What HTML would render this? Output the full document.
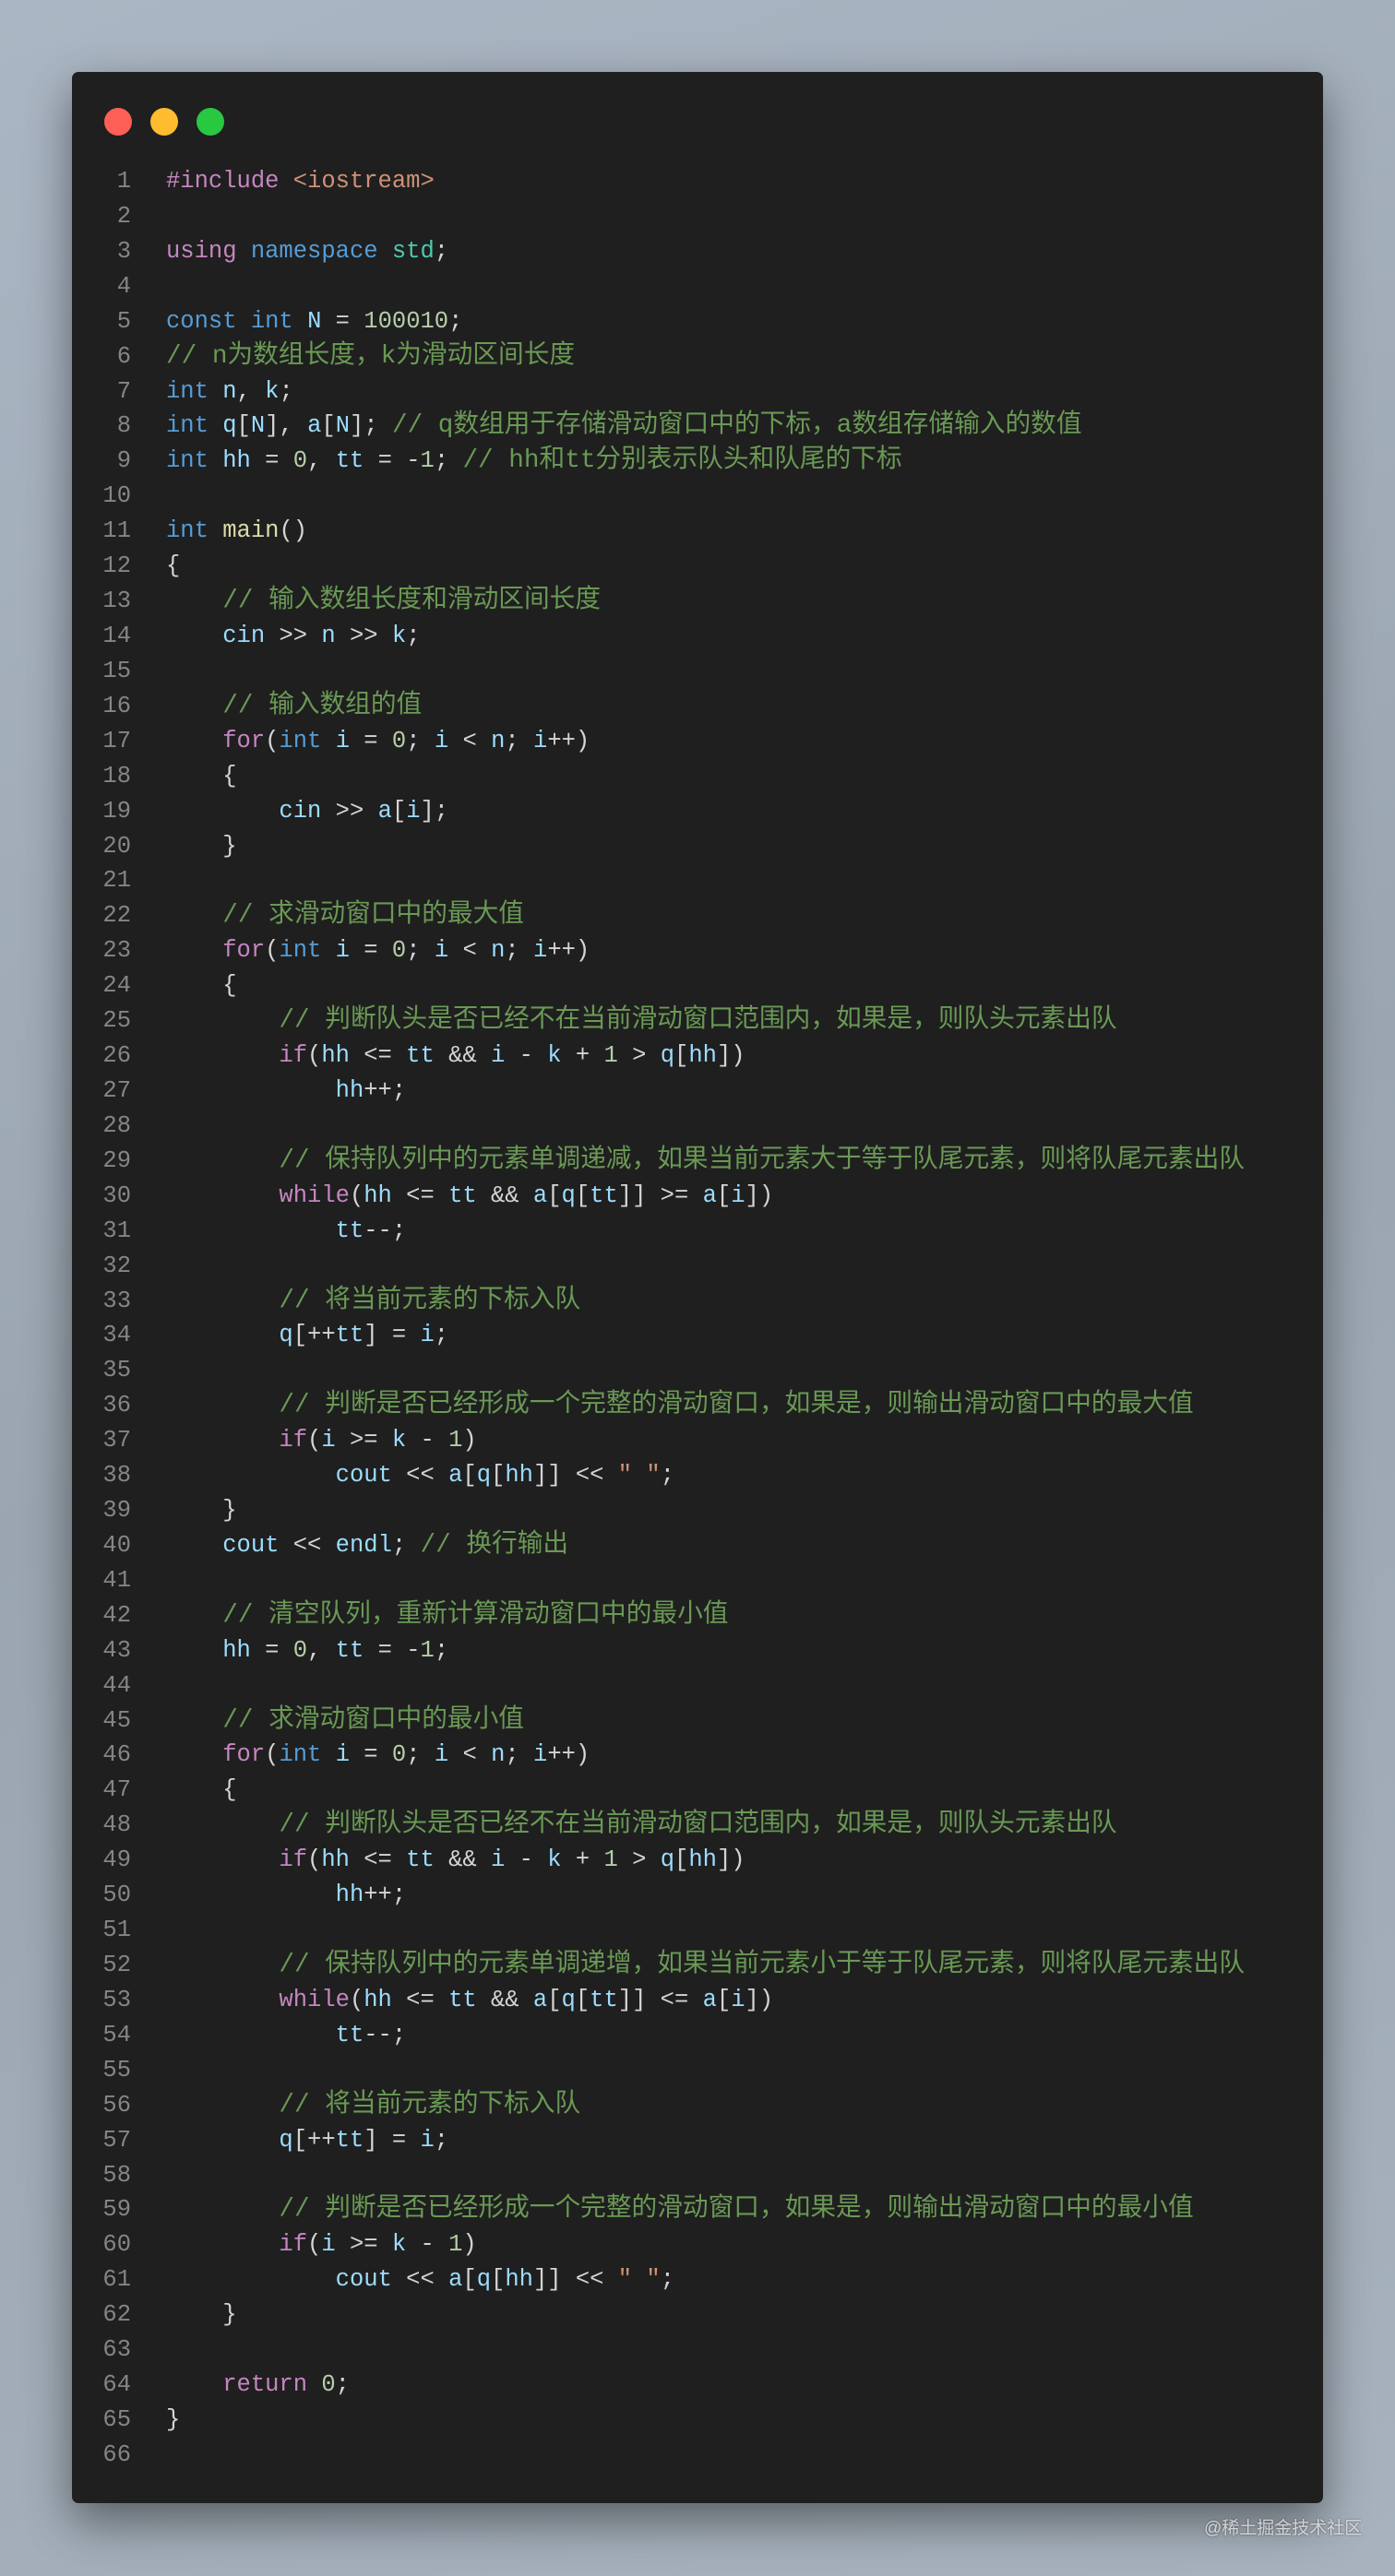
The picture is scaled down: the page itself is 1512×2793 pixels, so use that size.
<!DOCTYPE html>
<html><head><meta charset="utf-8"><style>
html,body{margin:0;padding:0}
body{width:1512px;height:2793px;position:relative;overflow:hidden;background:linear-gradient(160deg,#aab6c3 0%,#9aa5b0 50%,#a7b2bd 100%);font-family:"Liberation Mono","Noto Sans CJK SC",monospace}
.win{position:absolute;left:78px;top:78px;width:1356px;height:2636px;background:#1f1f1f;border-radius:7px;box-shadow:0 20px 50px rgba(0,0,0,.45)}
.dot{position:absolute;top:117px;width:30px;height:30px;border-radius:50%}
.code{position:absolute;left:0;top:178px;width:1512px;font-size:25.5px;color:#d4d4d4}
.l{height:37.93px;line-height:37.93px;white-space:pre;position:relative}
.n{position:absolute;left:0;width:142px;text-align:right;color:#858585}
.t{position:absolute;left:180px}
.k{color:#c586c0}.b{color:#569cd6}.s{color:#4ec9b0}.v{color:#9cdcfe}.num{color:#b5cea8}.str{color:#ce9178}.c{color:#6a9955;font-size:27.7px}.f{color:#dcdcaa}
.wm{position:absolute;left:1305px;top:2726px;font-family:"Liberation Sans","Noto Sans CJK SC",sans-serif;font-size:19px;color:rgba(240,240,240,.8);text-shadow:0 0 2px rgba(0,0,0,.5)}
</style></head><body>
<div class="win"></div>
<div class="dot" style="left:113px;background:#fe5f57"></div>
<div class="dot" style="left:163px;background:#febc2e"></div>
<div class="dot" style="left:213px;background:#28c840"></div>
<div class="code">
<div class="l"><span class="n">1</span><span class="t"><span class="k">#include</span> <span class="str">&lt;iostream&gt;</span></span></div>
<div class="l"><span class="n">2</span></div>
<div class="l"><span class="n">3</span><span class="t"><span class="k">using</span> <span class="b">namespace</span> <span class="s">std</span>;</span></div>
<div class="l"><span class="n">4</span></div>
<div class="l"><span class="n">5</span><span class="t"><span class="b">const</span> <span class="b">int</span> <span class="v">N</span> = <span class="num">100010</span>;</span></div>
<div class="l"><span class="n">6</span><span class="t"><span class="c">// n为数组长度，k为滑动区间长度</span></span></div>
<div class="l"><span class="n">7</span><span class="t"><span class="b">int</span> <span class="v">n</span>, <span class="v">k</span>;</span></div>
<div class="l"><span class="n">8</span><span class="t"><span class="b">int</span> <span class="v">q</span>[<span class="v">N</span>], <span class="v">a</span>[<span class="v">N</span>]; <span class="c">// q数组用于存储滑动窗口中的下标，a数组存储输入的数值</span></span></div>
<div class="l"><span class="n">9</span><span class="t"><span class="b">int</span> <span class="v">hh</span> = <span class="num">0</span>, <span class="v">tt</span> = -<span class="num">1</span>; <span class="c">// hh和tt分别表示队头和队尾的下标</span></span></div>
<div class="l"><span class="n">10</span></div>
<div class="l"><span class="n">11</span><span class="t"><span class="b">int</span> <span class="f">main</span>()</span></div>
<div class="l"><span class="n">12</span><span class="t">{</span></div>
<div class="l"><span class="n">13</span><span class="t">    <span class="c">// 输入数组长度和滑动区间长度</span></span></div>
<div class="l"><span class="n">14</span><span class="t">    <span class="v">cin</span> &gt;&gt; <span class="v">n</span> &gt;&gt; <span class="v">k</span>;</span></div>
<div class="l"><span class="n">15</span></div>
<div class="l"><span class="n">16</span><span class="t">    <span class="c">// 输入数组的值</span></span></div>
<div class="l"><span class="n">17</span><span class="t">    <span class="k">for</span>(<span class="b">int</span> <span class="v">i</span> = <span class="num">0</span>; <span class="v">i</span> &lt; <span class="v">n</span>; <span class="v">i</span>++)</span></div>
<div class="l"><span class="n">18</span><span class="t">    {</span></div>
<div class="l"><span class="n">19</span><span class="t">        <span class="v">cin</span> &gt;&gt; <span class="v">a</span>[<span class="v">i</span>];</span></div>
<div class="l"><span class="n">20</span><span class="t">    }</span></div>
<div class="l"><span class="n">21</span></div>
<div class="l"><span class="n">22</span><span class="t">    <span class="c">// 求滑动窗口中的最大值</span></span></div>
<div class="l"><span class="n">23</span><span class="t">    <span class="k">for</span>(<span class="b">int</span> <span class="v">i</span> = <span class="num">0</span>; <span class="v">i</span> &lt; <span class="v">n</span>; <span class="v">i</span>++)</span></div>
<div class="l"><span class="n">24</span><span class="t">    {</span></div>
<div class="l"><span class="n">25</span><span class="t">        <span class="c">// 判断队头是否已经不在当前滑动窗口范围内，如果是，则队头元素出队</span></span></div>
<div class="l"><span class="n">26</span><span class="t">        <span class="k">if</span>(<span class="v">hh</span> &lt;= <span class="v">tt</span> &amp;&amp; <span class="v">i</span> - <span class="v">k</span> + <span class="num">1</span> &gt; <span class="v">q</span>[<span class="v">hh</span>])</span></div>
<div class="l"><span class="n">27</span><span class="t">            <span class="v">hh</span>++;</span></div>
<div class="l"><span class="n">28</span></div>
<div class="l"><span class="n">29</span><span class="t">        <span class="c">// 保持队列中的元素单调递减，如果当前元素大于等于队尾元素，则将队尾元素出队</span></span></div>
<div class="l"><span class="n">30</span><span class="t">        <span class="k">while</span>(<span class="v">hh</span> &lt;= <span class="v">tt</span> &amp;&amp; <span class="v">a</span>[<span class="v">q</span>[<span class="v">tt</span>]] &gt;= <span class="v">a</span>[<span class="v">i</span>])</span></div>
<div class="l"><span class="n">31</span><span class="t">            <span class="v">tt</span>--;</span></div>
<div class="l"><span class="n">32</span></div>
<div class="l"><span class="n">33</span><span class="t">        <span class="c">// 将当前元素的下标入队</span></span></div>
<div class="l"><span class="n">34</span><span class="t">        <span class="v">q</span>[++<span class="v">tt</span>] = <span class="v">i</span>;</span></div>
<div class="l"><span class="n">35</span></div>
<div class="l"><span class="n">36</span><span class="t">        <span class="c">// 判断是否已经形成一个完整的滑动窗口，如果是，则输出滑动窗口中的最大值</span></span></div>
<div class="l"><span class="n">37</span><span class="t">        <span class="k">if</span>(<span class="v">i</span> &gt;= <span class="v">k</span> - <span class="num">1</span>)</span></div>
<div class="l"><span class="n">38</span><span class="t">            <span class="v">cout</span> &lt;&lt; <span class="v">a</span>[<span class="v">q</span>[<span class="v">hh</span>]] &lt;&lt; <span class="str">" "</span>;</span></div>
<div class="l"><span class="n">39</span><span class="t">    }</span></div>
<div class="l"><span class="n">40</span><span class="t">    <span class="v">cout</span> &lt;&lt; <span class="v">endl</span>; <span class="c">// 换行输出</span></span></div>
<div class="l"><span class="n">41</span></div>
<div class="l"><span class="n">42</span><span class="t">    <span class="c">// 清空队列，重新计算滑动窗口中的最小值</span></span></div>
<div class="l"><span class="n">43</span><span class="t">    <span class="v">hh</span> = <span class="num">0</span>, <span class="v">tt</span> = -<span class="num">1</span>;</span></div>
<div class="l"><span class="n">44</span></div>
<div class="l"><span class="n">45</span><span class="t">    <span class="c">// 求滑动窗口中的最小值</span></span></div>
<div class="l"><span class="n">46</span><span class="t">    <span class="k">for</span>(<span class="b">int</span> <span class="v">i</span> = <span class="num">0</span>; <span class="v">i</span> &lt; <span class="v">n</span>; <span class="v">i</span>++)</span></div>
<div class="l"><span class="n">47</span><span class="t">    {</span></div>
<div class="l"><span class="n">48</span><span class="t">        <span class="c">// 判断队头是否已经不在当前滑动窗口范围内，如果是，则队头元素出队</span></span></div>
<div class="l"><span class="n">49</span><span class="t">        <span class="k">if</span>(<span class="v">hh</span> &lt;= <span class="v">tt</span> &amp;&amp; <span class="v">i</span> - <span class="v">k</span> + <span class="num">1</span> &gt; <span class="v">q</span>[<span class="v">hh</span>])</span></div>
<div class="l"><span class="n">50</span><span class="t">            <span class="v">hh</span>++;</span></div>
<div class="l"><span class="n">51</span></div>
<div class="l"><span class="n">52</span><span class="t">        <span class="c">// 保持队列中的元素单调递增，如果当前元素小于等于队尾元素，则将队尾元素出队</span></span></div>
<div class="l"><span class="n">53</span><span class="t">        <span class="k">while</span>(<span class="v">hh</span> &lt;= <span class="v">tt</span> &amp;&amp; <span class="v">a</span>[<span class="v">q</span>[<span class="v">tt</span>]] &lt;= <span class="v">a</span>[<span class="v">i</span>])</span></div>
<div class="l"><span class="n">54</span><span class="t">            <span class="v">tt</span>--;</span></div>
<div class="l"><span class="n">55</span></div>
<div class="l"><span class="n">56</span><span class="t">        <span class="c">// 将当前元素的下标入队</span></span></div>
<div class="l"><span class="n">57</span><span class="t">        <span class="v">q</span>[++<span class="v">tt</span>] = <span class="v">i</span>;</span></div>
<div class="l"><span class="n">58</span></div>
<div class="l"><span class="n">59</span><span class="t">        <span class="c">// 判断是否已经形成一个完整的滑动窗口，如果是，则输出滑动窗口中的最小值</span></span></div>
<div class="l"><span class="n">60</span><span class="t">        <span class="k">if</span>(<span class="v">i</span> &gt;= <span class="v">k</span> - <span class="num">1</span>)</span></div>
<div class="l"><span class="n">61</span><span class="t">            <span class="v">cout</span> &lt;&lt; <span class="v">a</span>[<span class="v">q</span>[<span class="v">hh</span>]] &lt;&lt; <span class="str">" "</span>;</span></div>
<div class="l"><span class="n">62</span><span class="t">    }</span></div>
<div class="l"><span class="n">63</span></div>
<div class="l"><span class="n">64</span><span class="t">    <span class="k">return</span> <span class="num">0</span>;</span></div>
<div class="l"><span class="n">65</span><span class="t">}</span></div>
<div class="l"><span class="n">66</span></div>
</div>
<div class="wm">@稀土掘金技术社区</div>
</body></html>
